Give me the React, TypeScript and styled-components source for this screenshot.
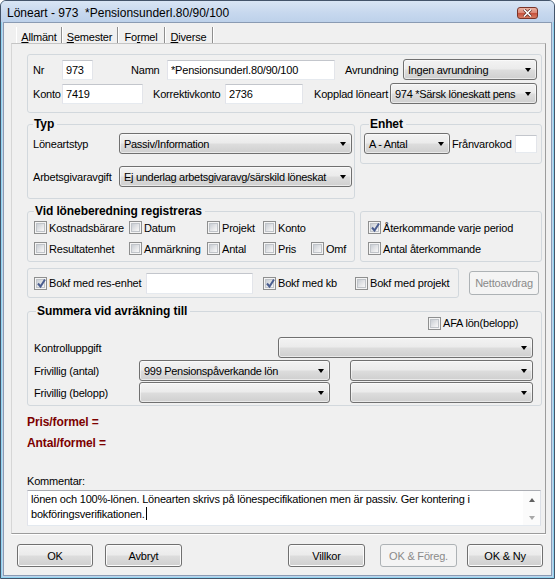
import React from "react";
import styled, { createGlobalStyle, css } from "styled-components";

const GlobalStyle = createGlobalStyle`
  html, body { margin: 0; padding: 0; background: #ffffff; }
  body {
    font-family: "Liberation Sans", Arial, sans-serif;
    font-size: 11px;
    letter-spacing: -0.2px;
    color: #000;
  }
  *, *::before, *::after { box-sizing: border-box; }
`;

const Window = styled.div`
  width: 555px;
  height: 579px;
  display: flex;
  flex-direction: column;
  border: 1px solid #44546a;
  border-radius: 6px 6px 0 0;
  background: #bfd3eb;
  box-shadow: inset 0 0 0 1px #8fd3f0;
  overflow: hidden;
`;

const TitleBar = styled.div`
  flex: none;
  height: 21px;
  display: flex;
  align-items: flex-start;
  padding: 5px 0 0 6px;
  background: linear-gradient(to bottom, #d9e5f4 0%, #c7d8ee 55%, #bdd1ea 100%);
`;

const TitleText = styled.div`
  flex: 1;
  font-size: 12px;
  line-height: 15px;
  letter-spacing: 0;
  white-space: pre;
`;

const CloseButton = styled.div`
  flex: none;
  width: 21px;
  height: 12px;
  margin: 1px 16px 0 0;
  display: flex;
  align-items: center;
  justify-content: center;
  border: 1px solid #7a3428;
  border-radius: 3px;
  background: linear-gradient(to bottom, #ebb3a4 0%, #dc8a78 45%, #c8523d 55%, #d57d64 100%);
`;

const Client = styled.div`
  flex: 1;
  display: flex;
  flex-direction: column;
  margin: 0 2px 2px 2px;
  border: 1px solid #8a9bb3;
  background: #f0f0f0;
`;

const TabStrip = styled.div`
  display: flex;
  height: 16px;
  margin: 4px 0 0 12px;
`;

const Tab = styled.div<{ $w: number; $active?: boolean }>`
  width: ${(p) => p.$w}px;
  padding-top: 3px;
  text-align: center;
  line-height: 14px;
  border-right: 1px solid #8e8e8e;
  box-shadow: 1px 0 0 #ffffff;
  ${(p) =>
    p.$active &&
    css`
      border-left: 1px solid #ffffff;
    `}
`;

const TabPanel = styled.div`
  width: 535px;
  height: 491px;
  margin-left: 7px;
  padding: 0 3px 0 15px;
  display: flex;
  flex-direction: column;
  border: 1px solid;
  border-color: #c4c4c4 #9c9c9c #9c9c9c #d6d6d6;
  box-shadow: 0 1px 0 #ffffff;
`;

const Row = styled.div<{ $mt?: number; $gap?: number; $align?: string }>`
  display: flex;
  align-items: ${(p) => p.$align ?? "flex-start"};
  gap: ${(p) => p.$gap ?? 5}px;
  margin-top: ${(p) => p.$mt ?? 0}px;
`;

const Group = styled.fieldset<{ $w?: number; $h: number; $pad?: string; $mt?: number }>`
  flex: none;
  margin: ${(p) => p.$mt ?? 0}px 0 0 0;
  width: ${(p) => (p.$w ? `${p.$w}px` : "100%")};
  height: ${(p) => p.$h}px;
  padding: ${(p) => p.$pad ?? "0"};
  min-width: 0;
  border: 1px solid #d2d8dd;
  border-radius: 3px;
`;

const Legend = styled.legend<{ $ml?: number }>`
  padding: 0 3px 0 1px;
  margin-left: ${(p) => p.$ml ?? 0}px;
  font-size: 12px;
  font-weight: bold;
  line-height: 14px;
  letter-spacing: -0.1px;
`;

const FieldRow = styled.div<{ $mt?: number; $h?: number }>`
  display: flex;
  align-items: center;
  height: ${(p) => p.$h ?? 21}px;
  margin-top: ${(p) => p.$mt ?? 0}px;
`;

const Label = styled.span<{ $w?: number; $ml?: number }>`
  flex: none;
  width: ${(p) => (p.$w ? `${p.$w}px` : "auto")};
  margin-left: ${(p) => p.$ml ?? 0}px;
  line-height: 14px;
  white-space: nowrap;
`;

const TextBox = styled.input<{ $w: number; $h?: number; $ml?: number }>`
  flex: none;
  width: ${(p) => p.$w}px;
  height: ${(p) => p.$h ?? 20}px;
  margin: 0 0 0 ${(p) => p.$ml ?? 0}px;
  padding: 0 3px;
  font: inherit;
  letter-spacing: inherit;
  color: #000;
  background: #ffffff;
  border: 1px solid;
  border-color: #c3c6cc #e3e5ea #e6eaef #e2e3ea;
  outline: none;
`;

const ComboBox = styled.div<{ $w: number; $h?: number; $ml?: number }>`
  flex: none;
  display: flex;
  align-items: center;
  width: ${(p) => p.$w}px;
  height: ${(p) => p.$h ?? 21}px;
  margin-left: ${(p) => p.$ml ?? 0}px;
  padding-left: 4px;
  border: 1px solid #707070;
  border-radius: 3px;
  background: linear-gradient(to bottom, #f3f3f3 0%, #ebebeb 48%, #dddddd 52%, #cfcfcf 100%);
  box-shadow: inset 0 0 0 1px rgba(255, 255, 255, 0.55);
`;

const ComboText = styled.span`
  flex: 1;
  min-width: 0;
  white-space: nowrap;
  line-height: 14px;
  letter-spacing: -0.3px;
`;

const ComboArrow = styled.span`
  flex: none;
  width: 0;
  height: 0;
  margin: 1px 5px 0 2px;
  border-left: 3.5px solid transparent;
  border-right: 3.5px solid transparent;
  border-top: 4px solid #000;
`;

const CheckItem = styled.div<{ $w?: number; $ml?: number }>`
  flex: none;
  display: flex;
  align-items: center;
  gap: 2px;
  height: 17px;
  width: ${(p) => (p.$w ? `${p.$w}px` : "auto")};
  margin-left: ${(p) => p.$ml ?? 0}px;
  white-space: nowrap;
`;

const CheckFrame = styled.span`
  flex: none;
  position: relative;
  width: 13px;
  height: 13px;
  padding: 1px;
  border: 1px solid #8e8f8f;
  background: #f4f4f4;
`;

const CheckFill = styled.span`
  display: block;
  width: 9px;
  height: 9px;
  border: 1px solid #c0c4c9;
  background: linear-gradient(135deg, #c9ced4 0%, #e7e8ea 60%, #f8f8f8 100%);
`;

const CheckMark = styled.svg`
  position: absolute;
  left: 1px;
  top: 0px;
`;

const CheckGrid = styled.div`
  display: grid;
  grid-template-columns: 95px 78px 56px 48px auto;
  grid-auto-rows: 17px;
  row-gap: 4px;
`;

const Stack = styled.div<{ $gap?: number }>`
  display: flex;
  flex-direction: column;
  gap: ${(p) => p.$gap ?? 4}px;
`;

const FormulaLabel = styled.div<{ $mt: number }>`
  margin-top: ${(p) => p.$mt}px;
  font-size: 12px;
  font-weight: bold;
  line-height: 14px;
  letter-spacing: -0.1px;
  color: #7c0000;
`;

const CommentLabel = styled.div`
  margin-top: 24px;
  line-height: 14px;
`;

const CommentBox = styled.div`
  display: flex;
  width: 514px;
  height: 36px;
  margin-top: 2px;
  background: #ffffff;
  border: 1px solid;
  border-color: #abadb3 #dbdfe6 #e3e9ef #e2e3ea;
`;

const CommentText = styled.div`
  flex: 1;
  padding: 1px 3px;
  line-height: 15px;
  white-space: nowrap;
`;

const Caret = styled.span`
  display: inline-block;
  width: 1px;
  height: 13px;
  margin-left: 1px;
  vertical-align: -2px;
  background: #000;
`;

const ScrollBar = styled.div`
  flex: none;
  width: 17px;
  display: flex;
  flex-direction: column;
  justify-content: space-between;
  align-items: center;
  padding: 7px 0 5px;
  background: #fbfbfb;
`;

const ScrollArrow = styled.span<{ $dir: "up" | "down" }>`
  width: 0;
  height: 0;
  border-left: 3.5px solid transparent;
  border-right: 3.5px solid transparent;
  ${(p) =>
    p.$dir === "up"
      ? css`
          border-bottom: 4px solid #606060;
        `
      : css`
          border-top: 4px solid #a8a8a8;
        `}
`;

const ButtonBar = styled.div`
  display: flex;
  margin-top: 10px;
  padding-left: 13px;
`;

const PushButton = styled.button<{ $w: number; $h?: number; $ml?: number }>`
  flex: none;
  width: ${(p) => p.$w}px;
  height: ${(p) => p.$h ?? 23}px;
  margin: 0 0 0 ${(p) => p.$ml ?? 0}px;
  padding: 0;
  font: inherit;
  letter-spacing: inherit;
  color: #000;
  border: 1px solid #707070;
  border-radius: 3px;
  background: linear-gradient(to bottom, #f2f2f2 0%, #ebebeb 49%, #dddddd 51%, #cfcfcf 100%);
  box-shadow: inset 0 0 0 1px #fbfbfb;

  &:disabled {
    color: #8a8a8a;
    border-color: #adb2b5;
    background: #f4f4f4;
    box-shadow: none;
  }
`;

function Combo({ w, h, ml, children }: { w: number; h?: number; ml?: number; children?: React.ReactNode }) {
  return (
    <ComboBox $w={w} $h={h} $ml={ml}>
      <ComboText>{children}</ComboText>
      <ComboArrow />
    </ComboBox>
  );
}

function Check({ label, checked, w, ml }: { label: string; checked?: boolean; w?: number; ml?: number }) {
  return (
    <CheckItem $w={w} $ml={ml}>
      <CheckFrame>
        <CheckFill />
        {checked && (
          <CheckMark width="11" height="11" viewBox="0 0 11 11">
            <path d="M2 5.5 L4.5 8.5 L9 1.5" fill="none" stroke="#4a5d8f" strokeWidth="2" />
          </CheckMark>
        )}
      </CheckFrame>
      <span>{label}</span>
    </CheckItem>
  );
}

const tabs = [
  { key: "A", rest: "llmänt", w: 46, pre: "" },
  { key: "S", rest: "emester", w: 56, pre: "" },
  { key: "r", rest: "mel", w: 47, pre: "Fo" },
  { key: "D", rest: "iverse", w: 48, pre: "" },
];

export default function App() {
  return (
    <>
      <GlobalStyle />
      <Window>
        <TitleBar>
          <TitleText>{"Löneart - 973  *Pensionsunderl.80/90/100"}</TitleText>
          <CloseButton>
            <svg width="9" height="8" viewBox="0 0 9 8">
              <path d="M1 0.5 L8 7.5 M8 0.5 L1 7.5" stroke="#5a2a22" strokeWidth="3" />
              <path d="M1 0.5 L8 7.5 M8 0.5 L1 7.5" stroke="#ffffff" strokeWidth="1.6" />
            </svg>
          </CloseButton>
        </TitleBar>
        <Client>
          <TabStrip>
            {tabs.map((t, i) => (
              <Tab key={t.key} $w={t.w} $active={i === 0}>
                {t.pre}
                <u>{t.key}</u>
                {t.rest}
              </Tab>
            ))}
          </TabStrip>
          <TabPanel>
            <Group $h={59} $mt={10} $pad="4px 0 0 5px">
              <FieldRow>
                <Label $w={29}>Nr</Label>
                <TextBox $w={31} defaultValue="973" readOnly />
                <Label $w={36} $ml={38}>Namn</Label>
                <TextBox $w={168} defaultValue="*Pensionsunderl.80/90/100" readOnly />
                <Label $w={58} $ml={10}>Avrundning</Label>
                <Combo w={134}>Ingen avrundning</Combo>
              </FieldRow>
              <FieldRow $mt={3}>
                <Label $w={29}>Konto</Label>
                <TextBox $w={81} defaultValue="7419" readOnly />
                <Label $w={72} $ml={10}>Korrektivkonto</Label>
                <TextBox $w={78} defaultValue="2736" readOnly />
                <Label $w={76} $ml={11}>Kopplad löneart</Label>
                <Combo w={147}>974 *Särsk löneskatt pens</Combo>
              </FieldRow>
            </Group>

            <Row $mt={4}>
              <Group $w={328} $h={82} $pad="2px 3px 0 5px">
                <Legend>Typ</Legend>
                <FieldRow>
                  <Label $w={86}>Löneartstyp</Label>
                  <Combo w={233}>Passiv/Information</Combo>
                </FieldRow>
                <FieldRow $mt={12}>
                  <Label $w={86}>Arbetsgivaravgift</Label>
                  <Combo w={233}>Ej underlag arbetsgivaravg/särskild löneskat</Combo>
                </FieldRow>
              </Group>
              <Group $w={182} $h={47} $pad="2px 3px 0 3px">
                <Legend $ml={5}>Enhet</Legend>
                <FieldRow>
                  <Combo w={86}>A - Antal</Combo>
                  <Label $w={63} $ml={2}>Frånvarokod</Label>
                  <TextBox $w={22} $h={18} readOnly />
                </FieldRow>
              </Group>
            </Row>

            <Row $mt={5}>
              <Group $w={328} $h={58} $pad="1px 3px 0 6px">
                <Legend>Vid löneberedning registreras</Legend>
                <CheckGrid>
                  <Check label="Kostnadsbärare" />
                  <Check label="Datum" />
                  <Check label="Projekt" />
                  <Check label="Konto" />
                  <span />
                  <Check label="Resultatenhet" />
                  <Check label="Anmärkning" />
                  <Check label="Antal" />
                  <Check label="Pris" />
                  <Check label="Omf" />
                </CheckGrid>
              </Group>
              <Group $w={182} $h={51} $mt={7} $pad="7px 3px 0 7px">
                <Stack>
                  <Check label="Återkommande varje period" checked />
                  <Check label="Antal återkommande" />
                </Stack>
              </Group>
            </Row>

            <Row $mt={6} $gap={10} $align="center">
              <Group $w={432} $h={30} $pad="0 0 0 6px">
                <FieldRow $h={28}>
                  <Check label="Bokf med res-enhet" checked w={112} />
                  <TextBox $w={107} $h={21} readOnly />
                  <Check label="Bokf med kb" checked w={92} ml={10} />
                  <Check label="Bokf med projekt" />
                </FieldRow>
              </Group>
              <PushButton $w={70} $h={24} disabled>
                Nettoavdrag
              </PushButton>
            </Row>

            <Group $h={102} $mt={6} $pad="0 8px 0 6px">
              <Legend $ml={2}>Summera vid avräkning till</Legend>
              <FieldRow $h={14} $mt={-2}>
                <Check label="AFA lön(belopp)" ml={394} />
              </FieldRow>
              <FieldRow $mt={7}>
                <Label $w={244}>Kontrolluppgift</Label>
                <Combo w={255} />
              </FieldRow>
              <FieldRow $mt={2}>
                <Label $w={105}>Frivillig (antal)</Label>
                <Combo w={191}>999 Pensionspåverkande lön</Combo>
                <Combo w={183} ml={20} />
              </FieldRow>
              <FieldRow $mt={1}>
                <Label $w={105}>Frivillig (belopp)</Label>
                <Combo w={191} />
                <Combo w={183} ml={20} />
              </FieldRow>
            </Group>

            <FormulaLabel $mt={9}>Pris/formel =</FormulaLabel>
            <FormulaLabel $mt={7}>Antal/formel =</FormulaLabel>

            <CommentLabel>Kommentar:</CommentLabel>
            <CommentBox>
              <CommentText>
                lönen och 100%-lönen. Lönearten skrivs på lönespecifikationen men är passiv. Ger kontering i
                <br />
                bokföringsverifikationen.
                <Caret />
              </CommentText>
              <ScrollBar>
                <ScrollArrow $dir="up" />
                <ScrollArrow $dir="down" />
              </ScrollBar>
            </CommentBox>
          </TabPanel>

          <ButtonBar>
            <PushButton $w={76}>OK</PushButton>
            <PushButton $w={77} $ml={12}>Avbryt</PushButton>
            <PushButton $w={77} $ml={106}>Villkor</PushButton>
            <PushButton $w={77} $ml={15} disabled>
              OK &amp; Föreg.
            </PushButton>
            <PushButton $w={76} $ml={10}>OK &amp; Ny</PushButton>
          </ButtonBar>
        </Client>
      </Window>
    </>
  );
}
